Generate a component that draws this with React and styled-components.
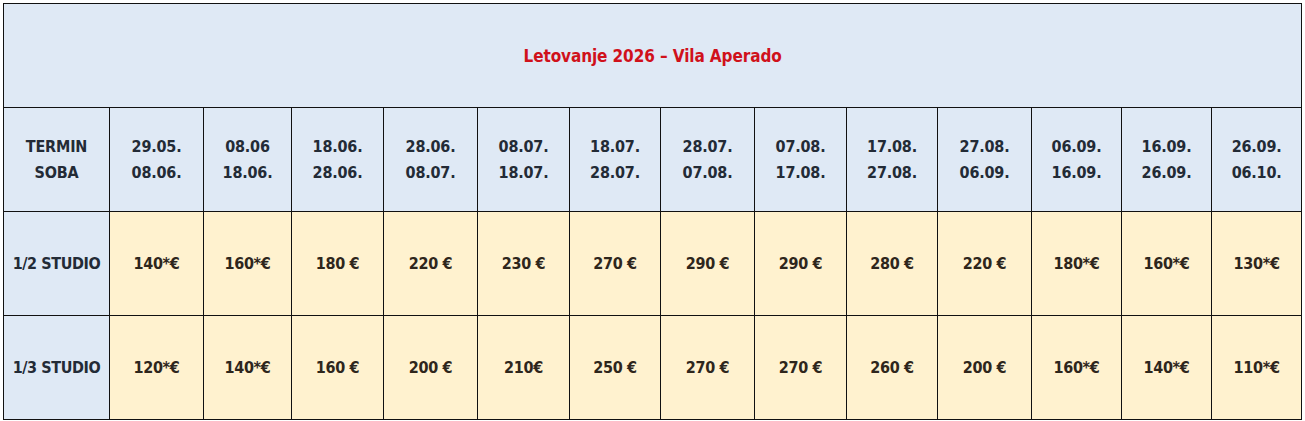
import styled, { createGlobalStyle } from "styled-components";

const GlobalStyle = createGlobalStyle`
  html, body {
    margin: 0;
    background: #fff;
  }
  body {
    font-family: "DejaVu Sans Condensed", "Liberation Sans Narrow", "Liberation Sans", sans-serif;
  }
`;

const colWidths = [106, 94, 88, 92, 94, 92, 91, 94, 92, 91, 94, 90, 90, 90];

const terms = [
  ["29.05.", "08.06."],
  ["08.06", "18.06."],
  ["18.06.", "28.06."],
  ["28.06.", "08.07."],
  ["08.07.", "18.07."],
  ["18.07.", "28.07."],
  ["28.07.", "07.08."],
  ["07.08.", "17.08."],
  ["17.08.", "27.08."],
  ["27.08.", "06.09."],
  ["06.09.", "16.09."],
  ["16.09.", "26.09."],
  ["26.09.", "06.10."],
];

const rooms = [
  {
    name: "1/2 STUDIO",
    prices: ["140*€", "160*€", "180 €", "220 €", "230 €", "270 €", "290 €", "290 €", "280 €", "220 €", "180*€", "160*€", "130*€"],
  },
  {
    name: "1/3 STUDIO",
    prices: ["120*€", "140*€", "160 €", "200 €", "210€", "250 €", "270 €", "270 €", "260 €", "200 €", "160*€", "140*€", "110*€"],
  },
];

const App = () => {
  return (
    <Page>
      <GlobalStyle />
      <PriceTable>
        <colgroup>
          {colWidths.map((w, i) => (
            <Col key={i} $w={w} />
          ))}
        </colgroup>
        <tbody>
          <Row>
            <Title colSpan={14}>Letovanje 2026 – Vila Aperado</Title>
          </Row>
          <Row>
            <HeadCell>
              TERMIN
              <br />
              SOBA
            </HeadCell>
            {terms.map(([from, to]) => (
              <HeadCell key={from + to}>
                {from}
                <br />
                {to}
              </HeadCell>
            ))}
          </Row>
          {rooms.map((room) => (
            <Row key={room.name}>
              <RoomCell>{room.name}</RoomCell>
              {room.prices.map((p, i) => (
                <PriceCell key={i}>{p}</PriceCell>
              ))}
            </Row>
          ))}
        </tbody>
      </PriceTable>
    </Page>
  );
};

const Page = styled.div`
  padding: 3px;
`;

const PriceTable = styled.table`
  border-collapse: collapse;
  table-layout: fixed;
  width: 1299px;
`;

const Col = styled.col`
  width: ${(p) => p.$w}px;
`;

const Row = styled.tr`
  height: 104px;
`;

const Cell = styled.td`
  border: 1px solid #111;
  padding: 0;
  text-align: center;
  vertical-align: middle;
  font-weight: 700;
  white-space: nowrap;
  letter-spacing: -0.2px;
`;

const Title = styled(Cell)`
  background: #dfe9f5;
  color: #d0111b;
  font-size: 17px;
  letter-spacing: -0.1px;
`;

const HeadCell = styled(Cell)`
  background: #dfe9f5;
  color: #232b36;
  font-size: 16px;
  line-height: 26px;
`;

const RoomCell = styled(Cell)`
  background: #dfe9f5;
  color: #232b36;
  font-size: 16px;
  letter-spacing: -0.4px;
`;

const PriceCell = styled(Cell)`
  background: #fff2cf;
  color: #2e261c;
  font-size: 16px;
  letter-spacing: -0.3px;
`;

export default App;
